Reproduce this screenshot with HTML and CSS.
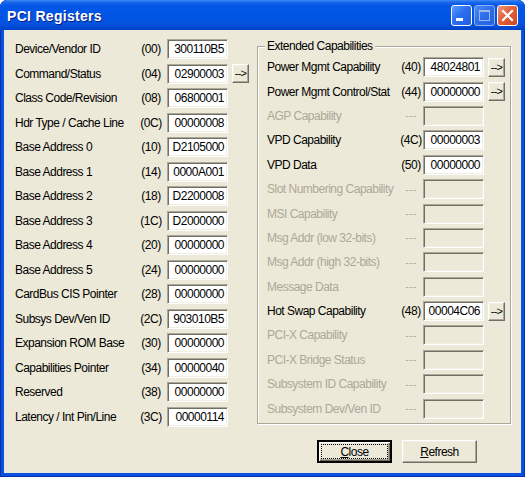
FILE: index.html
```html
<!DOCTYPE html>
<html>
<head>
<meta charset="utf-8">
<link rel="stylesheet" href="styles.css">
</head>
<body>
<div class="window">
  <div class="titlebar">
    <span class="title">PCI Registers</span>
    <div class="tbtns">
      <span class="tb tb-min"><svg width="19" height="19" viewBox="0 0 19 19"><rect x="4" y="12" width="7" height="3" fill="#fff"/></svg></span>
      <span class="tb tb-max"><svg width="19" height="19" viewBox="0 0 19 19"><rect x="4.5" y="4.5" width="10" height="10" fill="none" stroke="#9DB9EB" stroke-width="1"/><rect x="4" y="4" width="11" height="2" fill="#9DB9EB"/></svg></span>
      <span class="tb tb-close"><svg width="19" height="19" viewBox="0 0 19 19"><path d="M5 5 L14 14 M14 5 L5 14" stroke="#fff" stroke-width="2.2" stroke-linecap="square"/></svg></span>
    </div>
  </div>
  <div class="client">
    <div class="main">
      <div class="col-left">
        <div class="row"><span class="lbl">Device/Vendor ID</span><span class="off">(00)</span><span class="edit">300110B5</span></div>
        <div class="row"><span class="lbl">Command/Status</span><span class="off">(04)</span><span class="edit">02900003</span><span class="arrow">--&gt;</span></div>
        <div class="row"><span class="lbl">Class Code/Revision</span><span class="off">(08)</span><span class="edit">06800001</span></div>
        <div class="row"><span class="lbl">Hdr Type / Cache Line</span><span class="off">(0C)</span><span class="edit">00000008</span></div>
        <div class="row"><span class="lbl">Base Address 0</span><span class="off">(10)</span><span class="edit">D2105000</span></div>
        <div class="row"><span class="lbl">Base Address 1</span><span class="off">(14)</span><span class="edit">0000A001</span></div>
        <div class="row"><span class="lbl">Base Address 2</span><span class="off">(18)</span><span class="edit">D2200008</span></div>
        <div class="row"><span class="lbl">Base Address 3</span><span class="off">(1C)</span><span class="edit">D2000000</span></div>
        <div class="row"><span class="lbl">Base Address 4</span><span class="off">(20)</span><span class="edit">00000000</span></div>
        <div class="row"><span class="lbl">Base Address 5</span><span class="off">(24)</span><span class="edit">00000000</span></div>
        <div class="row"><span class="lbl">CardBus CIS Pointer</span><span class="off">(28)</span><span class="edit">00000000</span></div>
        <div class="row"><span class="lbl">Subsys Dev/Ven ID</span><span class="off">(2C)</span><span class="edit">903010B5</span></div>
        <div class="row"><span class="lbl">Expansion ROM Base</span><span class="off">(30)</span><span class="edit">00000000</span></div>
        <div class="row"><span class="lbl">Capabilities Pointer</span><span class="off">(34)</span><span class="edit">00000040</span></div>
        <div class="row"><span class="lbl">Reserved</span><span class="off">(38)</span><span class="edit">00000000</span></div>
        <div class="row"><span class="lbl">Latency / Int Pin/Line</span><span class="off">(3C)</span><span class="edit">00000114</span></div>
      </div>
      <div class="group">
        <span class="caption">Extended Capabilities</span>
        <div class="row"><span class="lbl">Power Mgmt Capability</span><span class="off">(40)</span><span class="edit">48024801</span><span class="arrow">--&gt;</span></div>
        <div class="row"><span class="lbl">Power Mgmt Control/Stat</span><span class="off">(44)</span><span class="edit">00000000</span><span class="arrow">--&gt;</span></div>
        <div class="row dis"><span class="lbl">AGP Capability</span><span class="off">---</span><span class="edit"></span></div>
        <div class="row"><span class="lbl">VPD Capability</span><span class="off">(4C)</span><span class="edit">00000003</span></div>
        <div class="row"><span class="lbl">VPD Data</span><span class="off">(50)</span><span class="edit">00000000</span></div>
        <div class="row dis"><span class="lbl">Slot Numbering Capability</span><span class="off">---</span><span class="edit"></span></div>
        <div class="row dis"><span class="lbl">MSI Capability</span><span class="off">---</span><span class="edit"></span></div>
        <div class="row dis"><span class="lbl">Msg Addr (low 32-bits)</span><span class="off">---</span><span class="edit"></span></div>
        <div class="row dis"><span class="lbl">Msg Addr (high 32-bits)</span><span class="off">---</span><span class="edit"></span></div>
        <div class="row dis"><span class="lbl">Message Data</span><span class="off">---</span><span class="edit"></span></div>
        <div class="row"><span class="lbl">Hot Swap Capability</span><span class="off">(48)</span><span class="edit">00004C06</span><span class="arrow">--&gt;</span></div>
        <div class="row dis"><span class="lbl">PCI-X Capability</span><span class="off">---</span><span class="edit"></span></div>
        <div class="row dis"><span class="lbl">PCI-X Bridge Status</span><span class="off">---</span><span class="edit"></span></div>
        <div class="row dis"><span class="lbl">Subsystem ID Capability</span><span class="off">---</span><span class="edit"></span></div>
        <div class="row dis"><span class="lbl">Subsystem Dev/Ven ID</span><span class="off">---</span><span class="edit"></span></div>
      </div>
    </div>
    <div class="buttons">
      <span class="btn btn-default"><span class="focus"><u>C</u>lose</span></span>
      <span class="btn"><span class="nofocus"><u>R</u>efresh</span></span>
    </div>
  </div>
</div>
</body>
</html>
```

FILE: styles.css
```css
html, body {
  margin: 0;
  padding: 0;
  background: #ffffff;
}

body {
  font-family: "Liberation Sans", Arial, sans-serif;
  font-size: 12px;
  letter-spacing: -0.5px;
  color: #000;
}

.window {
  width: 525px;
  height: 477px;
  box-sizing: border-box;
  display: flex;
  flex-direction: column;
  background: #0851E0;
  border-radius: 7px 7px 0 0;
  box-shadow: inset 0 0 0 1px #0831A9;
  overflow: hidden;
}

.titlebar {
  height: 30px;
  flex: none;
  display: flex;
  align-items: center;
  justify-content: space-between;
  padding: 0 7px 0 7px;
  box-sizing: border-box;
  background: linear-gradient(to bottom, #3E8CF6 0px, #1D6AEC 2px, #0658E6 5px, #0055E5 14px, #0453DF 24px, #0040C8 30px);
  border-radius: 7px 7px 0 0;
}

.title {
  font-family: "Liberation Sans", Arial, sans-serif;
  font-weight: bold;
  font-size: 14px;
  color: #fff;
  letter-spacing: 0.3px;
  text-shadow: 1px 1px 0 #0A1E80;
  padding-top: 1px;
}

.tbtns {
  display: flex;
  gap: 2px;
  padding-top: 1px;
}

.tb {
  width: 21px;
  height: 21px;
  box-sizing: border-box;
  border: 1px solid #fff;
  border-radius: 3px;
  display: flex;
  align-items: center;
  justify-content: center;
}

.tb svg {
  display: block;
}

.tb-min {
  background: linear-gradient(135deg, #5C9CFF 0%, #2A6FF0 45%, #1F5FE0 100%);
}

.tb-max {
  border-color: #8FB0EE;
  background: linear-gradient(135deg, #4A8CF7 0%, #2C6DEA 50%, #2362E0 100%);
}

.tb-close {
  background: linear-gradient(135deg, #EE9A7E 0%, #E2663F 40%, #CC4523 100%);
}

.client {
  flex: 1;
  margin: 0 4px 4px 4px;
  background: #ECE9D8;
  padding: 6px 0 0 11px;
}

.main {
  height: 404px;
  display: flex;
  align-items: flex-start;
}

.col-left {
  width: 242px;
  flex: none;
  padding-top: 1px;
}

.row {
  height: 24.4px;
  display: flex;
  align-items: center;
}

.col-left .row {
  height: 24.5px;
}

.col-left .lbl {
  width: 125px;
}

.col-left .off {
  width: 22px;
  text-align: center;
}

.col-left .edit {
  margin-left: 5px;
}

.lbl {
  flex: none;
  white-space: nowrap;
}

.off {
  flex: none;
}

.edit {
  flex: none;
  width: 61px;
  height: 20px;
  box-sizing: border-box;
  background: #fff;
  border: 1px solid;
  border-color: #ACA899 #FFFFFF #FFFFFF #ACA899;
  box-shadow: inset 1px 1px 0 #716F64, inset -1px -1px 0 #F1EFE2;
  text-align: right;
  padding-right: 3px;
  line-height: 18px;
}

.arrow {
  flex: none;
  margin-left: 4px;
  width: 17px;
  height: 19px;
  box-sizing: border-box;
  border: 1px solid;
  border-color: #FFFFFF #716F64 #716F64 #FFFFFF;
  box-shadow: inset -1px -1px 0 #ACA899, inset 1px 1px 0 #F1EFE2;
  background: #ECE9D8;
  font-size: 11px;
  line-height: 16px;
  text-align: center;
  letter-spacing: -0.7px;
}

.group {
  position: relative;
  width: 254px;
  height: 378px;
  box-sizing: border-box;
  margin-top: 10px;
  border: 1px solid #ACA899;
  box-shadow: inset 1px 1px 0 #fff, 1px 1px 0 #fff;
  padding: 8px 0 0 9px;
}

.caption {
  position: absolute;
  left: 7px;
  top: -8px;
  padding: 0 2px 0 2px;
  background: #ECE9D8;
  line-height: 14px;
}

.group .lbl {
  width: 133px;
}

.group .off {
  width: 22px;
  text-align: center;
}

.group .edit {
  margin-left: 1px;
}

.dis .lbl,
.dis .off {
  color: #ACA899;
}

.dis .off {
  font-size: 10px;
  letter-spacing: 0.3px;
}

.dis .edit {
  background: #ECE9D8;
}

.buttons {
  display: flex;
  padding-left: 302px;
  gap: 10px;
}

.btn {
  width: 75px;
  height: 23px;
  box-sizing: border-box;
  border: 1px solid;
  border-color: #FFFFFF #716F64 #716F64 #FFFFFF;
  box-shadow: inset -1px -1px 0 #ACA899, inset 1px 1px 0 #F1EFE2;
  background: #ECE9D8;
  display: flex;
  align-items: stretch;
  justify-content: stretch;
  padding: 3px;
}

.btn-default {
  border: 2px solid #000;
  box-shadow: inset 1px 1px 0 #fff, inset -1px -1px 0 #716F64, inset -2px -2px 0 #ACA899;
  padding: 2px;
}

.focus,
.nofocus {
  flex: 1;
  display: flex;
  align-items: center;
  justify-content: center;
}

.focus {
  outline: 1px dotted #000;
  outline-offset: -1px;
}
```
